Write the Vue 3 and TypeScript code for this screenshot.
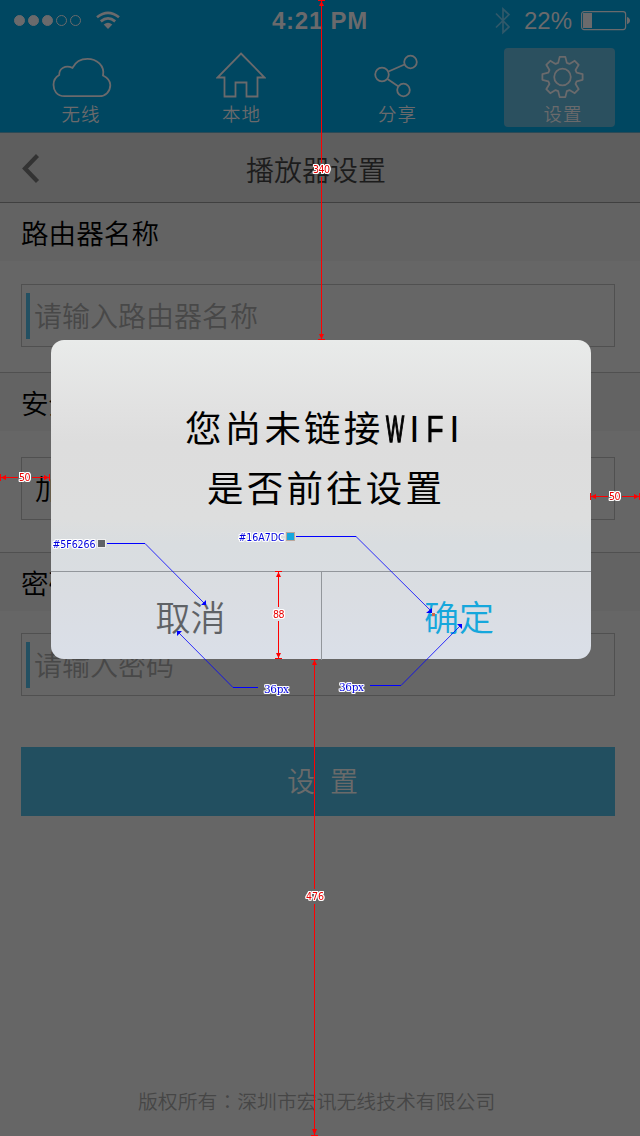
<script setup lang="ts">
interface Tab { id: string; label: string; active?: boolean }
interface Field { title: string; text: string; hint: boolean }

const tabs: Tab[] = [
  { id: 'cloud', label: '无线' },
  { id: 'home', label: '本地' },
  { id: 'share', label: '分享' },
  { id: 'gear', label: '设置', active: true },
]
const fields: Field[] = [
  { title: '路由器名称', text: '请输入路由器名称', hint: true },
  { title: '安全设置', text: '加密', hint: false },
  { title: '密码', text: '请输入密码', hint: true },
]
const signal = [true, true, true, false, false]

// Gear outline: eight flat teeth joined by straight flanks and shallow valleys
const gear = Array.from({ length: 8 }, (_, i) => {
  const pts: [number, number][] = [[14.8, -17], [20.3, -8], [20.3, 8], [14.8, 17]]
  return pts.map(([r, d]) => {
    const a = ((i * 45 + d - 90) * Math.PI) / 180
    return `${(21.5 + r * Math.cos(a)).toFixed(2)},${(21.5 + r * Math.sin(a)).toFixed(2)}`
  }).join(' ')
}).join(' ')
</script>

<template>
  <div class="screen">
    <header class="top">
      <div class="status">
        <div class="signal">
          <i v-for="(on, i) in signal" :key="i" :class="{ on }"></i>
          <svg class="wifi" width="24" height="19" viewBox="0 0 24 19">
            <g fill="none" stroke="#6a6a6c" stroke-width="2.7">
              <path d="M1 6.3 Q12 -2.7 23 6.3" />
              <path d="M4.8 10.4 Q12 4.5 19.2 10.4" />
            </g>
            <path d="M7.7 13.4 Q12 10 16.3 13.4 L12 18Z" fill="#6a6a6c" />
          </svg>
        </div>
        <b class="time">4:21 PM</b>
        <div class="power">
          <svg width="16" height="28" viewBox="0 0 16 28">
            <path d="M1 6.500 L14 20 L8 25.500 V2 L14 7.500 L1 20.500" fill="none" stroke="#30596a" stroke-width="1.7" />
          </svg>
          <span class="percent">22%</span>
          <svg width="50" height="20" viewBox="0 0 50 20">
            <rect x="0.6" y="0.6" width="44" height="18" rx="2.5" fill="none" stroke="#6a6a6c" stroke-width="1.2" />
            <rect x="2" y="2" width="9" height="15" fill="#6a6a6c" />
            <path d="M46 6 Q49 7 49 9.6 Q49 12.200 46 13.200Z" fill="#6a6a6c" />
          </svg>
        </div>
      </div>
      <nav class="tabs">
        <div v-for="t in tabs" :key="t.id" class="tab" :class="[t.id, { active: t.active }]">
          <svg v-if="t.id === 'cloud'" width="60" height="52" viewBox="0 0 60 52">
            <path d="M12.500 48.200 C4.500 48.200 1.500 42 1.500 36.800 C1.500 31.500 4.500 28.500 7.200 27 C7 20 13.500 17 20.500 19.800 C24 13 29.500 10.900 35.500 10.900 C44.500 10.900 53 17.500 51 27.500 C55.500 29.800 58.300 32.500 58.300 37 C58.300 43.500 53.500 48.200 47.500 48.200 Z" />
          </svg>
          <svg v-else-if="t.id === 'home'" width="50" height="52" viewBox="0 0 50 52">
            <path d="M25 5.500 L48.500 29.500 H41.500 V48.500 H30.500 V34.500 H19.500 V48.500 H8.500 V29.500 H1.500 Z" />
          </svg>
          <svg v-else-if="t.id === 'share'" width="44" height="52" viewBox="0 0 44 52">
            <circle cx="8" cy="26.500" r="6.800" /><circle cx="36.500" cy="14" r="6.300" /><circle cx="29.500" cy="42" r="6.300" />
            <path d="M14.500 23.500 L30.500 16.500 M13.500 31 L24.500 38.500" />
          </svg>
          <svg v-else width="43" height="52" viewBox="0 0 43 52">
            <g transform="translate(0 7.500)">
              <polygon :points="gear" stroke-linejoin="round" />
              <circle cx="21.500" cy="21.500" r="8.300" />
            </g>
          </svg>
          <span>{{ t.label }}</span>
        </div>
      </nav>
    </header>

    <div class="titlebar">
      <svg class="back" width="18" height="30" viewBox="0 0 18 30">
        <path d="M15.500 1.500 L3 14.500 L15.500 27.500" fill="none" stroke="#333" stroke-width="4.200" />
      </svg>
      <h1>播放器设置</h1>
    </div>

    <section v-for="f in fields" :key="f.title" class="group">
      <h2>{{ f.title }}</h2>
      <div class="field" :class="{ hint: f.hint }">
        <i v-if="f.hint"></i><span>{{ f.text }}</span>
      </div>
    </section>

    <button class="submit">设 置</button>
    <footer>版权所有<span class="colon">：</span>深圳市宏讯无线技术有限公司</footer>

    <div class="dialog">
      <div class="message">
        <p class="first">您尚未链接<span class="latin"><i class="w">W</i><i>I</i><i class="f">F</i><i>I</i></span></p>
        <p>是否前往设置</p>
      </div>
      <div class="actions">
        <span class="cancel">取消</span>
        <span class="ok">确定</span>
      </div>
    </div>

    <svg class="specs" width="640" height="1136" viewBox="0 0 640 1136">
      <g stroke="#f00" fill="#f00">
        <path d="M321.500 0V163M321.500 177V340M314.500 659V889M314.500 904V1136M278.500 571V607M278.500 621V659M0 477.500H18M32 477.500H50M591 496.500H608M622 496.500H640" fill="none" />
        <path d="M318 .5h7M318 339.500h7M311 659.500h7M311 1135.500h7M275 571.500h7M275 658.500h7M.5 474v7M49.500 474v7M590.500 493v7M639.500 493v7" fill="none" />
        <path stroke="none" d="M319 6h5l-2.500-5zM319 334h5l-2.500 5zM312 665h5l-2.500-5zM312 1129h5l-2.500 6zM276 577h5l-2.500-5zM276 653h5l-2.500 5zM6 475v5l-5-2.500zM44 475v5l5-2.500zM596 494v5l-5-2.500zM634 494v5l5-2.500z" />
      </g>
      <g class="num red">
        <text x="313" y="173" textLength="17">340</text>
        <text x="306" y="900" textLength="18">476</text>
        <text x="273" y="618" textLength="11.500">88</text>
        <text x="19" y="481" textLength="11.500">50</text>
        <text x="609" y="500" textLength="11.500">50</text>
      </g>
      <g fill="none" stroke="#00f">
        <path d="M107 543.500H145M296 536.500H356M233 687.500H258M370 685.500H401" />
        <path stroke-opacity=".8" d="M145 543.500L205 604M356 536.500L431 611M178 632L233 687.500M461 625L401 685.500" />
      </g>
      <path fill="#00f" d="M206 600v5h-5zM432 608v5h-6zM177 631h5l-5 5zM457 624h5v5z" />
      <path fill="#d4674a" d="M432 613h3v3h-3z" />
      <rect x="97.500" y="539.500" width="8" height="8" fill="#5f6266" stroke="#eee" />
      <rect x="286.500" y="532.500" width="8" height="8" fill="#16a7dc" stroke="#bba79c" />
      <g class="num blue">
        <text x="52.500" y="548" textLength="43">#5F6266</text>
        <text x="238.500" y="541" textLength="46">#16A7DC</text>
      </g>
      <g class="num blue px">
        <text x="264" y="693" textLength="25">36px</text>
        <text x="339" y="691" textLength="25">36px</text>
      </g>
    </svg>
  </div>
</template>

<style>
body { margin: 0; background: #666; }
</style>

<style scoped>
.screen { position: relative; width: 640px; height: 1136px; overflow: hidden; background: #666; font-family: "Liberation Sans", "Noto Sans CJK SC", sans-serif; font-weight: 350; color: #000; }
h1, h2, p { margin: 0; font-weight: 350; }
.top { height: 132px; background: #004761; border-bottom: 1px solid #2b4a56; color: #6a6a6c; }
.status { display: grid; grid-template-columns: 272px 223px 1fr; height: 48px; }
.signal { display: flex; padding: 15px 0 0 14px; gap: 3px; }
.signal i { box-sizing: border-box; width: 11px; height: 11px; border: 1px solid #6a6a6c; border-radius: 50%; }
.signal i.on { background: #6a6a6c; }
.wifi { margin: -4px 0 0 12px; }
.time { font-size: 24px; font-weight: 700; line-height: 42px; letter-spacing: .75px; white-space: nowrap; }
.power { display: flex; height: 41px; align-items: center; }
.percent { margin: 0 9px 0 13px; font-size: 24px; font-weight: 400; width: 48px; }
.tabs { display: grid; grid-template-columns: 164px 155px 157px 1fr; height: 79px; }
.tab { display: flex; flex-direction: column; align-items: center; font-size: 18.500px; letter-spacing: .9px; line-height: 29px; height: 79px; }
.tab svg { fill: none; stroke: #6a6a6c; stroke-width: 1.8; flex: none; }
.cloud svg { margin-right: 1px; }
.cloud span { margin-right: 2px; }
.home svg { margin-right: 1px; }
.share svg { margin-right: 3px; }
.gear svg { margin-right: 1px; }
.tab.active { width: 111px; margin-left: 28px; background: #2b505f; border-radius: 4px; box-sizing: border-box; padding-left: 7px; }
.titlebar { display: flex; height: 69px; background: #5e5e5e; border-bottom: 1px solid #404040; align-items: center; }
.back { margin: 3px 0 0 22px; }
h1 { margin: 3px 0 0 206px; font-size: 28px; color: #1c1c1c; }
.group { height: 169px; border-bottom: 1px solid #505050; }
.group:nth-of-type(2) { height: 179px; }
.group:nth-of-type(3) { height: auto; border-bottom: 0; }
h2 { height: 58px; line-height: 63px; padding-left: 21px; background: #636363; font-size: 27.600px; }
.field { display: flex; align-items: center; box-sizing: border-box; width: 594px; height: 63px; margin: 23px 0 0 21px; border: 1px solid #505050; padding-left: 13px; font-size: 28px; }
.field span { margin-top: -2px; }
.group:nth-of-type(2) .field { margin-top: 26px; }
.group:nth-of-type(3) .field { margin-top: 22px; }
.field i { width: 4px; height: 46px; background: #235062; margin-right: 4px; }
.field.hint { padding-left: 4px; color: #484848; }
.submit { display: block; width: 594px; height: 69px; margin: 51px 0 0 21px; padding: 0 0 3px 9px; border: 0; background: #224f60; color: #6a6a6a; font: 350 28px "Liberation Sans", "Noto Sans CJK SC", sans-serif; word-spacing: 7px; }
footer { margin: 270px 0 0 138px; font-size: 19.850px; line-height: 30px; color: #464646; white-space: nowrap; }
.colon { font-family: "Noto Sans CJK TC", sans-serif; }
.dialog { position: absolute; left: 51px; top: 340px; width: 540px; height: 319px; border-radius: 13px; background: linear-gradient(#e9ebea 0, #e1e1e1 22%, #dddddd 32%, #dddede 56%, #d9dde0 64%, #dadde2 80%, #dadfe8 100%); }
.message { height: 231px; box-sizing: border-box; padding-top: 60px; }
.message p { font-size: 36.500px; font-weight: 400; letter-spacing: 3.200px; line-height: 60px; height: 60px; padding-left: 156px; white-space: nowrap; }
.message .first { padding-left: 134px; display: flex; }
.latin { display: flex; letter-spacing: 0; margin-left: 1px; }
.latin i { width: 20px; display: flex; justify-content: center; font-style: normal; font-size: 37px; }
.latin .w { transform: scaleX(.52); -webkit-text-stroke: 1.500px #000; }
.latin .f { transform: scaleX(.77); -webkit-text-stroke: .5px #000; }
.actions { display: grid; grid-template-columns: 270px 1fr; height: 88px; box-sizing: border-box; border-top: 1px solid #92969b; font-size: 35px; font-weight: 350; line-height: 93px; text-align: center; }
.actions span { height: 88px; }
.cancel { color: #5f6266; padding-left: 9px; }
.ok { color: #16a7dc; border-left: 1px solid #92969b; padding-left: 5px; }
.specs { position: absolute; left: 0; top: 0; pointer-events: none; }
.num { font: 400 10.500px "DejaVu Sans Condensed", "DejaVu Sans", sans-serif; filter: drop-shadow(1px 0 0 #fff) drop-shadow(-1px 0 0 #fff) drop-shadow(0 1px 0 #fff) drop-shadow(0 -1px 0 #fff); }
.red { fill: #e80000; }
.blue { fill: #00d; }
.px { font-family: "DejaVu Serif", serif; }
</style>
